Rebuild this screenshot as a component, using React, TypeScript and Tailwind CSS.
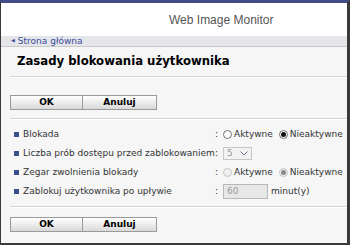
import React from "react";

const labelFont = { fontFamily: '"DejaVu Sans", Verdana, sans-serif' };

function Buttons() {
  return (
    <div className="flex h-[15px] ml-0">
      <button className="w-[73px] h-[15px] border border-[#9a9a9a] bg-gradient-to-b from-white to-[#d9d9d9] text-[9px] font-bold text-black leading-none">
        OK
      </button>
      <button className="w-[74px] h-[15px] border border-l-0 border-[#9a9a9a] bg-gradient-to-b from-white to-[#d9d9d9] text-[9px] font-bold text-black leading-none">
        Anuluj
      </button>
    </div>
  );
}

function Divider() {
  return <div className="h-[2px] border-t border-[#d4d4d4] border-b border-b-white -mr-[10px]" />;
}

function Radio({ checked, disabled }: { checked?: boolean; disabled?: boolean }) {
  return (
    <span
      className={
        "inline-flex items-center justify-center w-[9px] h-[9px] rounded-full border " +
        (disabled ? "border-[#c4c4c4] bg-[#f0f0f0]" : "border-[#707070] bg-white")
      }
    >
      {checked && (
        <span
          className={
            "w-[5px] h-[5px] rounded-full " + (disabled ? "bg-[#8a8a8a]" : "bg-[#111]")
          }
        />
      )}
    </span>
  );
}

function Row({ label, children }: { label: string; children: React.ReactNode }) {
  return (
    <div className="flex items-center h-[19px]">
      <div className="flex items-center w-[205px] pl-[4px]">
        <span className="w-[5px] h-[5px] bg-[#3a4f8c] mr-[4px] shrink-0" />
        <span className="text-[9px] text-[#333] whitespace-nowrap">{label}</span>
      </div>
      <span className="text-[9px] text-[#333] w-[8px]">:</span>
      <div className="flex items-center text-[9px] text-[#333]">{children}</div>
    </div>
  );
}

export default function App() {
  return (
    <div
      className="w-[350px] h-[245px] overflow-hidden flex flex-col border-t-[3px] border-t-[#3f4c85] border-l-[1px] border-r-[3px] border-b-[2px] border-l-[#3a3a3a] border-r-[#3a3a3a] border-b-[#3a3a3a] bg-[#f6f6f6]"
      style={labelFont}
    >
      <div className="h-[33px] bg-white flex items-center pl-[168px] shrink-0">
        <span
          className="text-[12px] text-[#555]"
          style={{ fontFamily: '"Liberation Sans", Arial, sans-serif' }}
        >
          Web Image Monitor
        </span>
      </div>
      <div className="h-[11px] bg-[#e4e6ea] border-b border-[#c9c9c9] flex items-center pl-[10px] shrink-0">
        <span className="text-[5px] text-[#3b4b9c] mr-[3px]">◀</span>
        <span className="text-[9px] text-[#3b4b9c] leading-none">Strona główna</span>
      </div>
      <div className="flex-1 pl-[9px] flex flex-col">
        <div className="h-[29px] flex items-center pl-[7px] pt-[1px]">
          <span className="text-[11.7px] font-bold text-black">Zasady blokowania użytkownika</span>
        </div>
        <Divider />
        <div className="h-[17px]" />
        <Buttons />
        <div className="h-[8px]" />
        <Divider />
        <div className="h-[5px]" />
        <Row label="Blokada">
          <Radio />
          <span className="ml-[2px] mr-[6px]">Aktywne</span>
          <Radio checked />
          <span className="ml-[2px]">Nieaktywne</span>
        </Row>
        <Row label="Liczba prób dostępu przed zablokowaniem">
          <div className="w-[29px] h-[13px] border border-[#c6c6c6] bg-[#f2f2f2] flex items-center justify-between px-[3px]">
            <span className="text-[#999]">5</span>
            <svg width="8" height="5" viewBox="0 0 8 5" fill="none">
              <path d="M0.5 0.5 L4 4 L7.5 0.5" stroke="#6a7290" strokeWidth="1" />
            </svg>
          </div>
        </Row>
        <Row label="Zegar zwolnienia blokady">
          <Radio disabled />
          <span className="ml-[2px] mr-[6px]">Aktywne</span>
          <Radio checked disabled />
          <span className="ml-[2px]">Nieaktywne</span>
        </Row>
        <Row label="Zablokuj użytkownika po upływie">
          <div className="w-[45px] h-[15px] border border-[#b8b8b8] bg-[#e7e7e7] flex items-center px-[3px]">
            <span className="text-[#999]">60</span>
          </div>
          <span className="ml-[3px]">minut(y)</span>
        </Row>
        <div className="h-[5px]" />
        <Divider />
        <div className="h-[9px]" />
        <Buttons />
      </div>
    </div>
  );
}
